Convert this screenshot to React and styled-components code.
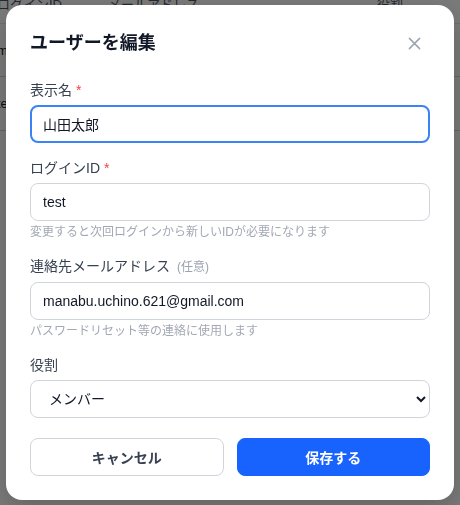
import React from "react";
import styled, { createGlobalStyle } from "styled-components";

const Global = createGlobalStyle`
  html, body { margin: 0; padding: 0; background: #ffffff; }
  body { font-family: "Liberation Sans", "Noto Sans CJK JP", sans-serif; color: #111827; overflow: hidden; }
  * { box-sizing: border-box; }
`;

const Page = styled.div`
  margin-top: -16px;
  margin-left: -3px;
  width: 470px;
`;

const TableRow = styled.div`
  display: grid;
  grid-template-columns: 111px 269px 1fr;
  align-items: center;
  height: ${(p) => p.$h}px;
  border-bottom: 1px solid ${(p) => (p.$head ? "#e5e7eb" : "#d1d5db")};
  font-size: 13px;
  color: ${(p) => (p.$head ? "#4b5563" : "#111827")};
`;

const Overlay = styled.div`
  position: fixed;
  inset: 0;
  background: rgba(0, 0, 0, 0.52);
  display: flex;
  justify-content: center;
  align-items: flex-start;
  padding-top: 5px;
`;

const Modal = styled.div`
  width: 448px;
  background: #ffffff;
  border-radius: 16px;
  padding: 24px;
  box-shadow: 0 10px 30px rgba(0, 0, 0, 0.2);
  display: flex;
  flex-direction: column;
`;

const Header = styled.div`
  display: flex;
  align-items: center;
  justify-content: space-between;
  height: 28px;
  margin-bottom: 23px;
`;

const Title = styled.h2`
  margin: 0;
  font-size: 18px;
  font-weight: 700;
  color: #111827;
  line-height: 28px;
`;

const CloseButton = styled.button`
  border: none;
  background: none;
  padding: 0;
  width: 20px;
  height: 20px;
  display: flex;
  align-items: center;
  justify-content: center;
  margin-right: 6px;
  color: #9ca3af;
  cursor: pointer;
`;

const Form = styled.div`
  display: flex;
  flex-direction: column;
  gap: 15px;
`;

const Field = styled.div`
  display: flex;
  flex-direction: column;
`;

const Label = styled.label`
  font-size: 14px;
  line-height: 21px;
  color: #374151;
  margin-bottom: 4px;
  display: flex;
  align-items: baseline;
`;

const Required = styled.span`
  color: #ef4444;
  margin-left: 4px;
`;

const Optional = styled.span`
  color: #9ca3af;
  font-size: 12px;
  margin-left: 7px;
`;

const Input = styled.input`
  width: 100%;
  height: 38px;
  border-radius: 8px;
  border: ${(p) => (p.$active ? "2px solid #3b82f6" : "1px solid #d1d5db")};
  padding: 0 ${(p) => (p.$active ? 11 : 12)}px;
  font-family: inherit;
  font-size: 14px;
  color: #111827;
  background: #fff;
  outline: none;
`;

const Select = styled.select`
  width: 100%;
  height: 38px;
  border-radius: 8px;
  border: 1px solid #d1d5db;
  padding: 0 8px 0 14px;
  font-family: inherit;
  font-size: 14px;
  color: #111827;
  background: #fff;
  outline: none;
`;

const Hint = styled.p`
  margin: 2px 0 0;
  font-size: 12px;
  line-height: 18px;
  color: #a3a8b3;
`;

const Actions = styled.div`
  display: grid;
  grid-template-columns: 1fr 1fr;
  gap: 13px;
  margin-top: 20px;
`;

const Button = styled.button`
  height: 38px;
  border-radius: 8px;
  font-family: inherit;
  font-size: 14px;
  font-weight: 700;
  cursor: pointer;
  border: ${(p) => (p.$primary ? "1px solid #1863fe" : "1px solid #d1d5db")};
  background: ${(p) => (p.$primary ? "#1863fe" : "#ffffff")};
  color: ${(p) => (p.$primary ? "#ffffff" : "#374151")};
`;

export default function App() {
  return (
    <>
      <Global />
      <Page>
        <TableRow $head $h={40}>
          <span>ログインID</span>
          <span>メールアドレス</span>
          <span>役割</span>
        </TableRow>
        <TableRow $h={53}>
          <span>manabu</span>
          <span>manabu.uchino.621@gmail.com</span>
          <span>管理者</span>
        </TableRow>
        <TableRow $h={54}>
          <span>test</span>
          <span>test@example.com</span>
          <span>メンバー</span>
        </TableRow>
      </Page>
      <Overlay>
        <Modal>
          <Header>
            <Title>ユーザーを編集</Title>
            <CloseButton aria-label="閉じる">
              <svg width="13" height="13" viewBox="0 0 14 14" fill="none">
                <path d="M1.5 1.5L12.5 12.5M12.5 1.5L1.5 12.5" stroke="currentColor" strokeWidth="1.6" strokeLinecap="round" />
              </svg>
            </CloseButton>
          </Header>
          <Form>
            <Field>
              <Label>表示名<Required>*</Required></Label>
              <Input $active autoFocus defaultValue="山田太郎" />
            </Field>
            <Field>
              <Label>ログインID<Required>*</Required></Label>
              <Input defaultValue="test" />
              <Hint>変更すると次回ログインから新しいIDが必要になります</Hint>
            </Field>
            <Field>
              <Label>連絡先メールアドレス<Optional>(任意)</Optional></Label>
              <Input defaultValue="manabu.uchino.621@gmail.com" />
              <Hint>パスワードリセット等の連絡に使用します</Hint>
            </Field>
            <Field>
              <Label>役割</Label>
              <Select defaultValue="member">
                <option value="member">メンバー</option>
                <option value="admin">管理者</option>
              </Select>
            </Field>
          </Form>
          <Actions>
            <Button>キャンセル</Button>
            <Button $primary>保存する</Button>
          </Actions>
        </Modal>
      </Overlay>
    </>
  );
}
